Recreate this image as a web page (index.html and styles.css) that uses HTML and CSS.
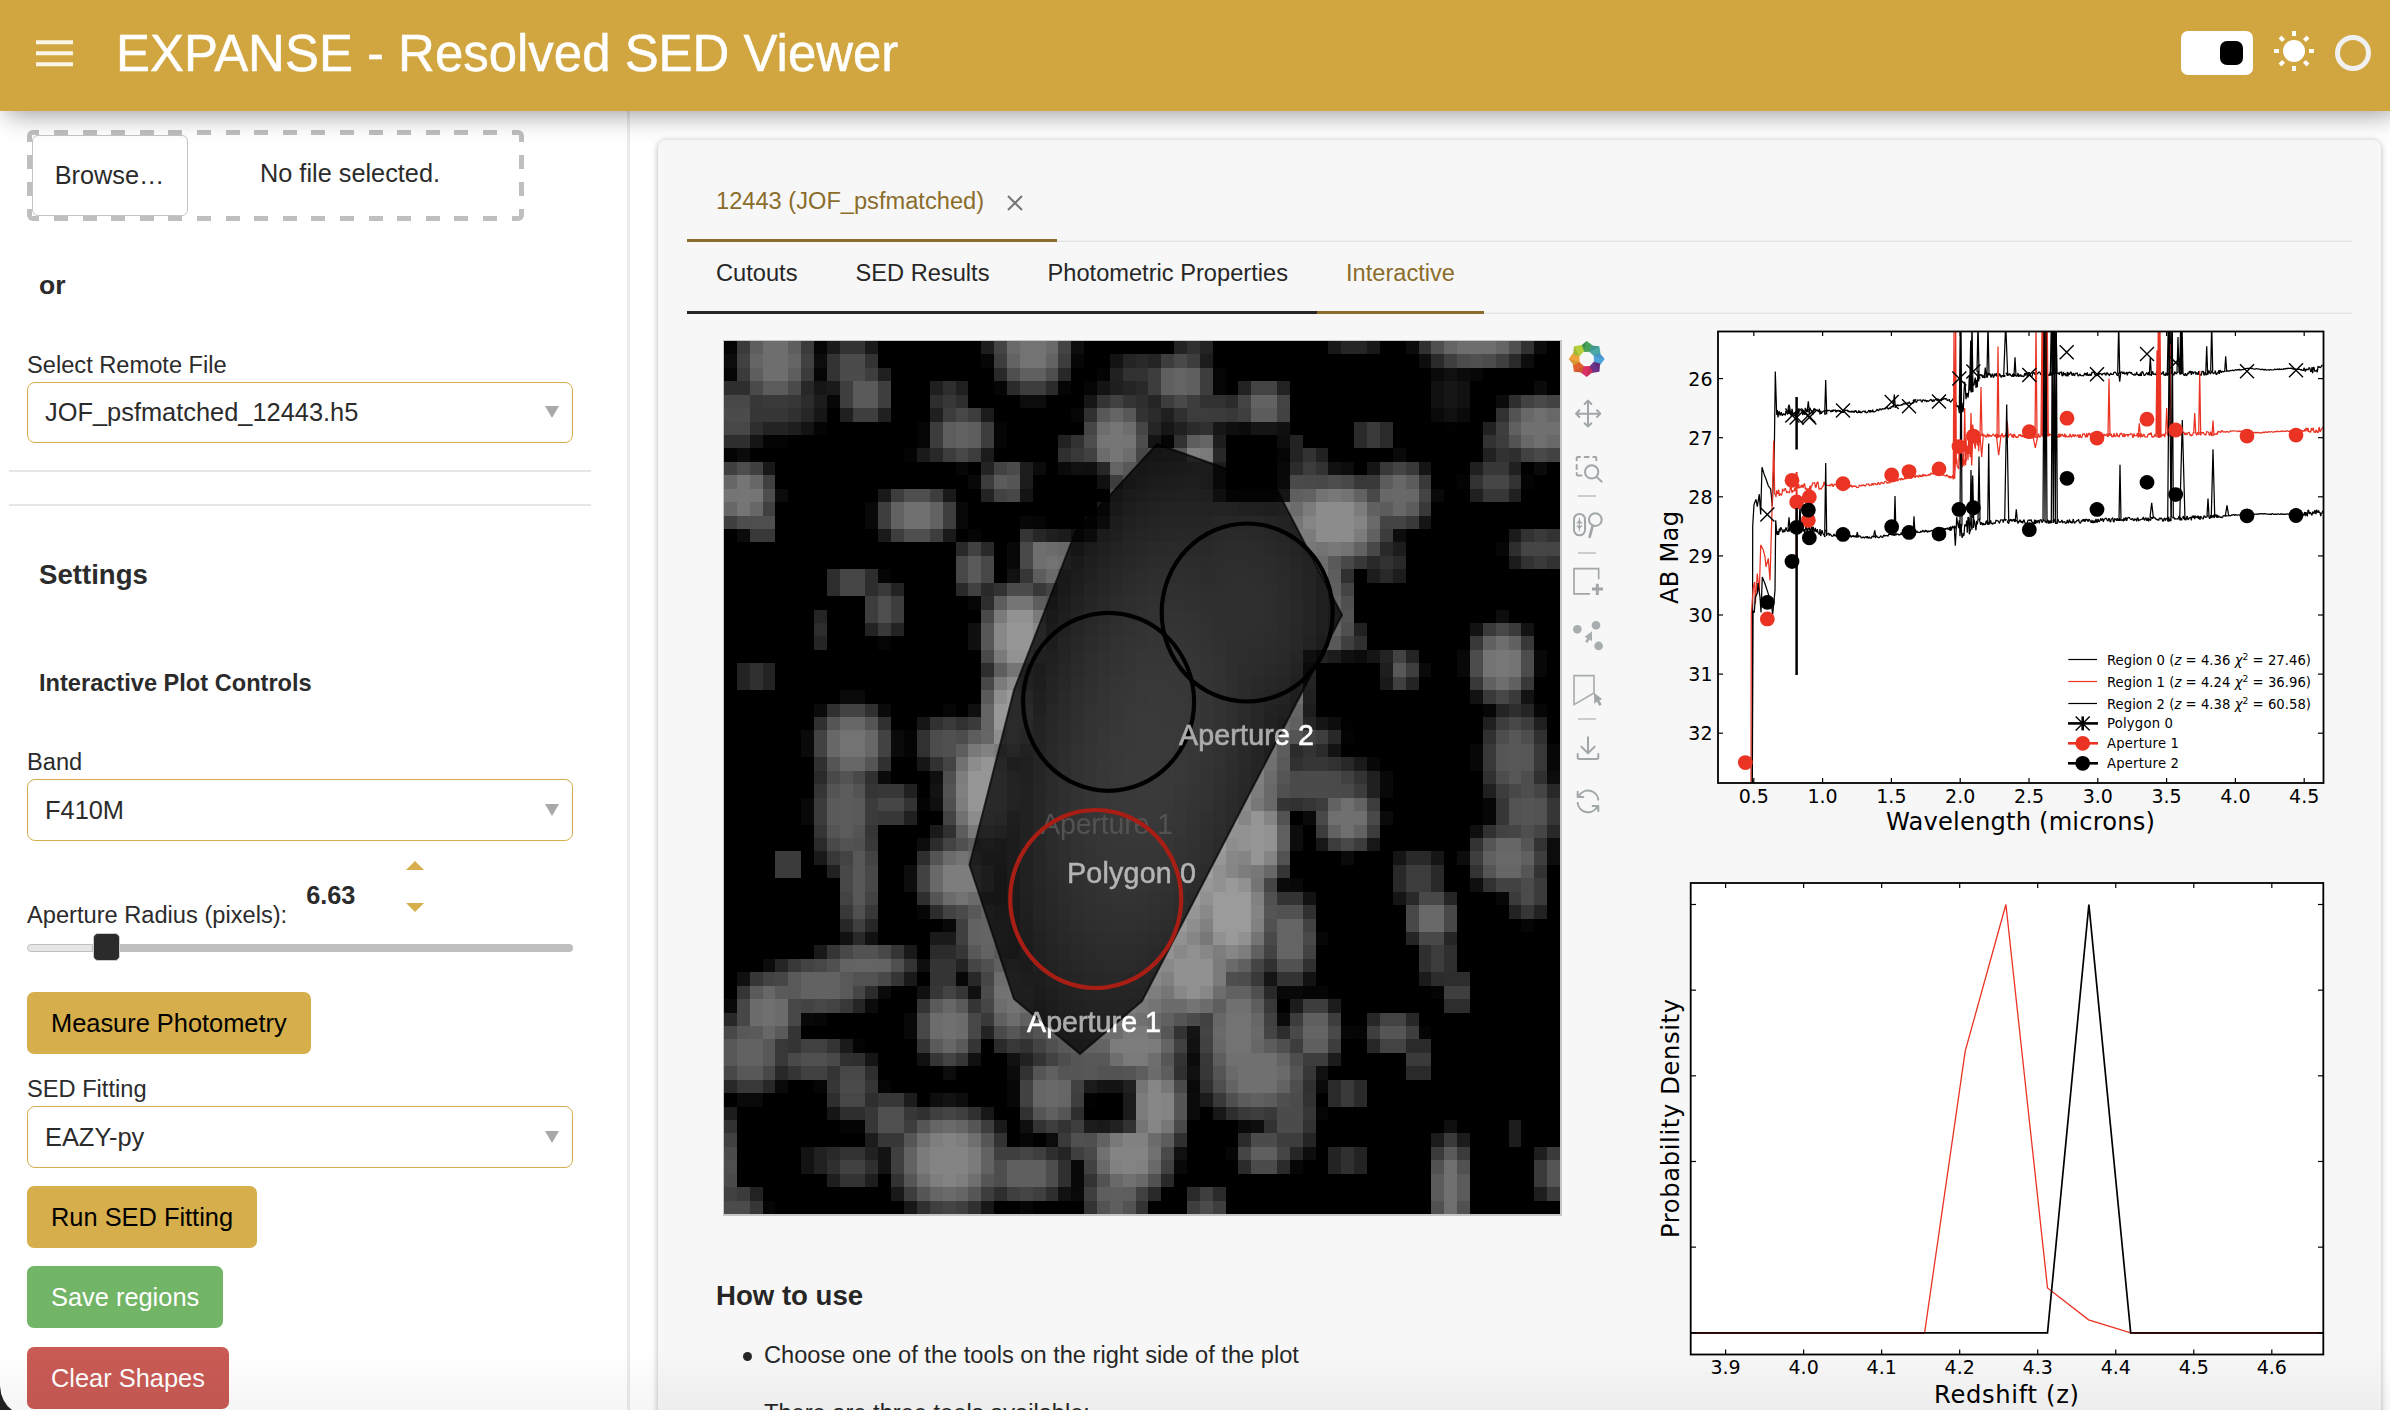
FILE: index.html
```html
<!DOCTYPE html>
<html lang="en">
<head>
<meta charset="utf-8">
<title>EXPANSE - Resolved SED Viewer</title>
<link rel="stylesheet" href="styles.css">
</head>
<body>
<header class="header">
  <svg class="menu" viewBox="0 0 38 28"><path d="M0 2.2h37M0 13.2h37M0 24.2h37" stroke="#fbf5e8" stroke-width="4"/></svg>
  <h1 class="title">EXPANSE - Resolved SED Viewer</h1>
  <div class="toggle"><span class="knob"></span></div>
  <svg class="sun" viewBox="-21 -21 42 42"><circle r="11" fill="#fff"/><g stroke="#fff" stroke-width="4"><path d="M0-20v5M0 20v-5M-20 0h5M20 0h-5M-14-14l3.6 3.6M14 14l-3.6-3.6M-14 14l3.6-3.6M14-14l-3.6 3.6"/></g></svg>
  <span class="ring"></span>
</header>
<div class="layout">
  <aside class="sidebar">
    <div class="filedrop"><button class="browse">Browse…</button><span class="nofile">No file selected.</span></div>
    <h3 class="or">or</h3>
    <label class="label remote">Select Remote File</label>
    <div class="select first"><span>JOF_psfmatched_12443.h5</span><i class="caret"></i></div>
    <div class="rule r1"></div>
    <div class="rule r2"></div>
    <h3 class="settings">Settings</h3>
    <h4 class="controls">Interactive Plot Controls</h4>
    <label class="label band">Band</label>
    <div class="select"><span>F410M</span><i class="caret"></i></div>
    <div class="radius"><span class="label">Aperture Radius (pixels):</span><b class="value">6.63</b><span class="spin"><i class="up"></i><i class="down"></i></span></div>
    <div class="slider"><span class="done"></span><span class="handle"></span><span class="rest"></span></div>
    <button class="btn gold measure">Measure Photometry</button>
    <label class="label fitting">SED Fitting</label>
    <div class="select"><span>EAZY-py</span><i class="caret"></i></div>
    <button class="btn gold run">Run SED Fitting</button>
    <button class="btn green">Save regions</button>
    <button class="btn red">Clear Shapes</button>
  </aside>
  <main class="main">
    <section class="card">
      <nav class="tabs outer"><a class="tab on">12443 (JOF_psfmatched)<svg class="close" viewBox="0 0 16 16"><path d="M1 1l14 14M15 1L1 15" stroke="#777" stroke-width="2"/></svg></a></nav>
      <nav class="tabs inner"><a class="tab">Cutouts</a><a class="tab">SED Results</a><a class="tab">Photometric Properties</a><a class="tab on">Interactive</a></nav>
      <div class="content">
        <div class="left">
          <div class="viewer">
            <div class="figure">
              <canvas id="cutout" class="cutout" width="65" height="65"></canvas>
              <svg class="shapes" viewBox="724 341 836 873">
                <g id="poly"><path d="M1157 444L1275 486L1342 615L1142 1001L1080 1054L1014 999L969.500 865L1014 690L1075 533Z" fill="#000" fill-opacity=".6" stroke="#000" stroke-opacity=".7" stroke-width="2"/></g>
                <g fill="none" stroke-width="4.200"><ellipse cx="1108.600" cy="701.800" rx="85.500" ry="89" stroke="#000"/><ellipse cx="1247.200" cy="612.500" rx="85.500" ry="89" stroke="#000"/></g>
                <g class="tags">
                  <text x="1041" y="834" textLength="132" fill="#7b7b7b" stroke="none">Aperture 1</text>
                  <text x="1179" y="745" textLength="135">Aperture 2</text>
                  <text x="1027" y="1031.500" textLength="134">Aperture 1</text>
                </g>
                <path d="M1157 444L1275 486L1342 615L1142 1001L1080 1054L1014 999L969.500 865L1014 690L1075 533Z" fill="#000" fill-opacity=".33"/>
                <text class="tag" x="1067" y="882.500" textLength="129" fill="#b4b4b4">Polygon 0</text>
                <ellipse cx="1095.700" cy="899" rx="85.500" ry="89" fill="none" stroke="#a81e14" stroke-width="4.200"/>
              </svg>
            </div>
            <div class="toolbar">
              <svg viewBox="66 63 150 135"><g id="logo" transform="translate(140 117)"></g></svg>
              <svg viewBox="66 198 150 164"><g class="ic"><path d="M144 244v74M108 281h73M134 252l10-10 10 10M134 310l10 10 10-10M118 271l-10 10 10 10M171 271l10 10-10 10"/></g></svg>
              <svg viewBox="66 362 150 164"><g class="ic"><path d="M110 420v-6q0-4 4-4h6M134 410h12M160 410h6q3 0 3 4v6M110 434v12M110 458v4q0 4 4 4h10"/><circle cx="155" cy="455" r="20"/><path d="M170 470l15 14"/></g></svg>
              <hr>
              <svg viewBox="66 531 150 162"><g class="ic"><rect x="102" y="581" width="33" height="64" rx="16"/><circle cx="166" cy="598" r="19"/><path d="M158 616l-9 34" stroke-width="8"/><path d="M118 594v38M111 608h15M111 617h15" stroke-width="3"/></g><path d="M110 607l8-9 8 9zM110 618l8 9 8-9z" fill="#a1a6a9"/></svg>
              <hr>
              <svg viewBox="66 699 150 164"><g fill="none" stroke="#a1a6a9" stroke-width="5"><path d="M176 775v-32h-74v76h48"/><path d="M172 788v34M156 804h33" stroke-width="9"/></g></svg>
              <svg viewBox="66 863 150 164"><g fill="#a8adb0"><circle cx="112" cy="927" r="13"/><circle cx="168" cy="915" r="13"/><circle cx="176" cy="977" r="13"/><path d="M156 933v30l-7-5-7 10-7-4 7-10-8-5z"/></g></svg>
              <svg class="active" viewBox="66 1027 150 164"><path d="M162 1117v-52h-60v87z" fill="none" stroke="#a8adb0" stroke-width="5"/><path d="M162 1116l25 20-9 3 7 13-7 4-7-13-8 7z" fill="#a1a6a9"/></svg>
              <hr>
              <svg viewBox="66 1197 150 162"><g class="ic"><path d="M144 1248v44M124 1276l20 20 20-20M113 1298v10q0 5 5 5h52q5 0 5-5v-10"/></g></svg>
              <svg viewBox="66 1359 150 164"><g class="ic"><path d="M175 1436a31 31 0 0 0-58-11M113 1412v16h17M113 1446a31 31 0 0 0 58 12M175 1471v-16h-17"/></g></svg>
            </div>
          </div>
          <h3 class="how">How to use</h3>
          <ul class="steps"><li>Choose one of the tools on the right side of the plot</li><li>There are three tools available:</li></ul>
        </div>
        <div class="plots">
          <svg id="sed" class="sed" viewBox="1640 314 712 536"></svg>
          <svg id="pdf" class="pdf" viewBox="1640 850 712 560"></svg>
        </div>
      </div>
    </section>
  </main>
</div>
<div class="fade"></div>
<svg class="corner" viewBox="0 0 12 24"><path d="M0 0Q1 16 12 24H0Z" fill="#222"/></svg>
<script src="script.js"></script>
</body>
</html>
```
FILE: styles.css
```css
* { box-sizing: border-box; }
body { margin: 0; width: 2390px; height: 1410px; overflow: hidden; position: relative; background: #fff; color: #2b2b2b; font-family: "Liberation Sans", Arial, sans-serif; font-size: 23.65px; }
h1, h3, h4, ul { margin: 0; padding: 0; }
svg { display: block; }
.header { position: relative; z-index: 2; height: 111px; padding: 0 19px 0 36px; display: flex; align-items: center; background: #d1a640; box-shadow: 6px 4px 24px rgba(0,0,0,.38); }
.menu { width: 38px; height: 28px; margin-top: -3px; }
.title { margin: -4px auto 0 42px; color: #fff; font-size: 50.950px; font-weight: 400; line-height: 60px; white-space: nowrap; -webkit-text-stroke: .5px #fff; }
.toggle { width: 72px; height: 44px; margin-top: -5px; padding: 10px; display: flex; justify-content: flex-end; background: #fff; border-radius: 7px; }
.knob { width: 23px; height: 24px; background: #000; border-radius: 7px; }
.sun { width: 42px; height: 42px; margin: -9px 20px 0; }
.ring { width: 36px; height: 36px; margin-top: -5px; border: 5px solid #f0f0f0; border-radius: 50%; }
.layout { display: flex; height: 1299px; }
.sidebar { width: 630px; flex: none; padding: 19px 0 0 27px; border-right: 3px solid #ebebeb; display: flex; flex-direction: column; align-items: flex-start; }
.filedrop { --dash-x: repeating-linear-gradient(90deg, #bfbfbf 0 12.400px, transparent 12.400px 26.900px, #bfbfbf 26.900px 28.600px); --dash-y: repeating-linear-gradient(#bfbfbf 0 12px, transparent 12px 25px, #bfbfbf 25px 27px); width: 497px; height: 91px; padding: 5px; display: flex; font-size: 25.3px; background: var(--dash-x) top / 100% 5px no-repeat, var(--dash-x) bottom / 100% 5px no-repeat, var(--dash-y) left / 5px 100% no-repeat, var(--dash-y) right / 5px 100% no-repeat; border-radius: 6px; }
.browse { width: 156px; height: 81px; padding: 0 1px 0 0; border: 1px solid #c4c4c4; border-radius: 6px; background: #fff; color: inherit; font: inherit; }
.nofile { margin-left: 72px; line-height: 76px; }
.or { margin: 43.500px 0 0 12px; font-size: 26.500px; line-height: 40px; }
.label { line-height: 30px; }
.remote { margin-top: 45px; }
.select { width: 546px; height: 62px; margin-top: 2.500px; padding: 0 13px 0 17px; border: 1.500px solid #d6af4c; border-radius: 8px; display: flex; justify-content: space-between; align-items: center; background: #fff; font-size: 25.400px; }
.select.first { height: 61px; }
.caret { border: 7px solid transparent; border-top: 12px solid #a8a8a8; border-bottom: 0; margin-top: -1px; }
.rule { width: 582px; height: 2px; margin-left: -18px; background: #e6e6e6; }
.r1 { margin-top: 26.500px; }
.r2 { margin-top: 32.500px; }
.settings { margin: 48.500px 0 0 12px; font-size: 27.600px; line-height: 40px; }
.controls { margin: 68.500px 0 0 12px; font-size: 23.600px; line-height: 40px; }
.band { margin-top: 43.500px; }
.radius { width: 546px; height: 91.500px; display: flex; }
.radius .label { margin-top: 58.500px; }
.value { margin: 33.500px 0 0 19px; font-size: 25.300px; line-height: 40px; }
.spin { margin: 19.500px 0 0 51px; display: flex; flex-direction: column; gap: 33px; }
.up, .down { border: 9px solid transparent; }
.up { border-bottom-color: #d6af4c; border-top: 0; }
.down { border-top-color: #d6af4c; border-bottom: 0; }
.slider { width: 546px; height: 28px; display: flex; align-items: center; }
.done { width: 66px; height: 8px; background: #e6e6e6; border: 1px solid #bfbfbf; border-radius: 4px 0 0 4px; margin-top: 2px; }
.handle { width: 27px; height: 28px; background: #2b2b2b; border: 1px solid #ccc; border-radius: 5px; }
.rest { flex: 1; height: 8px; background: #bfbfbf; border-radius: 0 4px 4px 0; margin-top: 2px; }
.btn { flex: none; height: 62px; margin-top: 18px; padding: 0 24px; border: 0; border-radius: 7px; font: 25.400px/62px "Liberation Sans", Arial, sans-serif; white-space: nowrap; }
.gold { background: #d6af4c; color: #000; }
.run { margin-top: 17.500px; }
.green { background: #73b566; color: #fff; }
.red { background: #c95a54; color: #fff; margin-top: 19px; }
.measure { margin-top: 31px; }
.fitting { margin-top: 20px; }
.main { flex: 1; padding: 29px 9px 0 28px; }
.card { height: 1300px; padding: 30px 29px 0; background: #f7f7f7; border-radius: 8px; box-shadow: 0 1px 6px rgba(0,0,0,.3); }
.tabs { display: flex; height: 72px; color: #262626; box-shadow: inset 0 -1.500px #e6e6e6; }
.tab { height: 72px; padding: 0 29px; border-bottom: 3px solid #262626; display: flex; align-items: center; line-height: 60px; }
.tab.on { color: #8a6d2b; border-color: #8a6d2b; }
.outer .tab { padding-bottom: 9px; padding-top: 1px; }
.inner .tab { padding-bottom: 8px; }
.close { width: 16px; height: 16px; margin: 4px 5px 0 23px; }
.content { display: flex; }
.left { width: 953px; flex: none; padding: 26px 0 0 36px; }
.viewer { display: flex; }
.figure { position: relative; width: 839px; height: 876px; border: 1px solid #c8c6c6; border-width: 1px 2px 2px 1px; background: #000; }
.cutout { display: block; width: 836px; height: 873px; image-rendering: pixelated; }
.shapes { position: absolute; left: 0; top: 0; width: 836px; height: 873px; }
.tags, .tag { font: 28.600px "Liberation Sans", Arial, sans-serif; }
.tags { fill: #fff; stroke: #fff; stroke-width: .6; }
.tag { stroke: #b4b4b4; stroke-width: .5; }
.toolbar { width: 50px; display: flex; flex-direction: column; padding-top: 1px; }
.toolbar svg { width: 50px; height: 54.600px; flex: none; }
.toolbar svg:first-child { height: 45px; }
.toolbar hr { flex: none; width: 18px; height: 2px; margin: 0 0 0 16px; border: 0; background: #ccc; }
.ic { fill: none; stroke: #a1a6a9; stroke-width: 6; stroke-linecap: round; stroke-linejoin: round; }
.active { box-shadow: -3px 0 #57a8dc; }
.how { margin: 60px 0 0 -7px; font-size: 27.600px; line-height: 40px; color: #262626; }
.steps { margin: 10px 0 0 41px; line-height: 58px; color: #262626; list-style: none; }
.steps li { display: flex; align-items: center; margin-left: -21px; }
.steps li::before { content: ""; width: 9px; height: 9px; margin: 2px 12px 0 0; border-radius: 50%; background: #262626; }
.plots { width: 712px; display: flex; flex-direction: column; }
.sed { width: 712px; height: 536px; }
.pdf { width: 712px; height: 560px; }
.plots text { font-family: "DejaVu Sans", sans-serif; fill: #000; }
.fade { position: absolute; left: 0; right: 0; bottom: 0; height: 60px; background: linear-gradient(rgba(0,0,0,0), rgba(0,0,0,.04)); }
.corner { position: absolute; left: 0; bottom: 0; width: 12px; height: 24px; }
```
FILE: script.js
```javascript
(() => {
// Cutout: light sources as [col0, col1, row0, row1, peak] on a 65 x 65 grid
const sources = [
[1,7,-2,5,110],[0,8,2,7,55],[-1,3,3,8,75],[8,12,0,4,75],[9,13,2,6,90],[16,19,3,6,55],[16,21,5,9,98],[15,20,8,9,40],
[21,27,-3,4,115],[20,27,-1,1,70],[35,38,-1,1,50],[33,38,1,5,100],[30,35,1,4,50],[28,33,4,11,118],[26,29,7,10,60],[28,35,3,8,50],
[34,42,4,7,60],[40,44,3,7,98],[35,40,7,10,130],[47,51,-1,1,40],[54,63,-2,2,110],[49,52,6,8,60],[44,47,8,11,60],[43,45,7,9,45],
[60,67,4,9,112],[59,62,6,9,60],[58,62,9,12,70],[55,58,2,6,22],[43,52,10,17,140],[43,48,10,12,75],[50,55,9,14,105],[50,53,15,18,50],
[61,66,14,17,70],[-1,4,9,14,118],[2,4,12,15,80],[12,18,11,15,112],[20,25,9,12,92],[23,28,13,19,115],[18,21,15,19,90],[8,12,17,19,75],
[11,14,18,22,78],[7,8,20,23,45],[1,4,24,26,50],[7,13,27,33,115],[7,12,30,40,92],[9,12,35,45,88],[11,15,33,36,70],[4,6,38,40,70],[20,26,18,26,150],
[20,25,23,33,155],[17,24,28,39,150],[15,22,37,43,125],[15,20,28,32,80],[18,23,40,48,100],[20,25,44,53,115],[16,26,35,41,90],
[39,44,33,41,150],[36,43,37,48,155],[33,40,43,51,145],[37,43,46,57,115],[37,46,51,58,112],[41,51,31,35,75],[46,51,33,38,112],
[42,46,41,48,100],[44,48,49,54,100],[42,46,54,61,75],[40,44,59,62,95],[23,28,53,59,105],[28,36,50,55,125],[31,36,53,61,135],
[28,35,57,64,132],[28,33,61,66,95],[23,36,52,56,88],[26,30,58,61,80],[15,20,48,54,112],[16,18,44,50,55],[13,22,57,65,132],[20,27,60,64,95],
[7,15,45,48,100],[3,12,46,50,98],[1,6,47,53,112],[-1,5,50,56,98],[4,10,52,55,80],[8,12,53,58,75],[11,15,56,60,80],[6,13,60,62,45],
[8,12,60,63,65],[-1,1,57,66,80],[-1,3,63,66,75],[58,63,21,27,120],[49,54,23,26,95],[47,50,21,24,60],[59,64,27,35,88],[60,65,32,38,85],
[58,64,36,41,105],[61,64,39,43,75],[52,56,38,42,60],[53,57,41,45,105],[54,57,44,48,60],[56,58,47,50,65],[50,54,50,53,85],[53,55,52,55,60],
[47,50,55,57,60],[47,50,60,62,50],[55,58,59,67,112],[63,67,60,64,85],[61,62,58,60,30],[36,39,63,66,75],[43,48,27,31,70],[46,49,16,25,100],
[22,29,46,54,90]
];
// Dark patches that cut into the galaxy, with softened edges
const gaps = [[39,43,7,11],[40,43,9,11],[24,29,10,13],[25,28,12,14],[46,51,24,28],[29,31,56,58]];
const ctx = document.getElementById('cutout').getContext('2d');
for (let r = 0; r < 65; r++) for (let c = 0; c < 65; c++) {
  let v = 0;
  const x = c + .5, y = r + .5;
  for (const [a, b, t, u, p] of sources) {
    const dx = (x - (a + b) / 2) / ((b - a) / 2 + .3), dy = (y - (t + u) / 2) / ((u - t) / 2 + .3);
    const d = dx * dx + dy * dy;
    if (d < 1.2) v = Math.max(v, p * Math.min(1, 1.1 - .88 * d));
  }
  // Main galaxy: tilted disc plus a companion core at the upper right
  const ang = .2, gx = x - 33, gy = y - 31;
  const gu = gx * Math.cos(ang) + gy * Math.sin(ang), gv = -gx * Math.sin(ang) + gy * Math.cos(ang);
  const g = (gu / 11) ** 2 + (gv / 24) ** 2;
  if (g < 1) v = Math.max(v, 75 + 140 * (1 - g));
  const n = ((x - 40) / 8.5) ** 2 + ((y - 20) / 12) ** 2;
  if (n < 1) v = Math.max(v, 75 + 100 * (1 - n));
  for (const [a, b, t, u] of gaps) {
    const ox = Math.max(a - x, x - b, 0), oy = Math.max(t - y, y - u, 0);
    v *= Math.min(1, Math.hypot(ox, oy) / 1.6);
  }
  v = Math.round(Math.max(0, v));
  ctx.fillStyle = `rgb(${v},${v},${v})`;
  ctx.fillRect(c, r, 1, 1);
}

// Toolbar logo: ring of eight coloured blades
const blades = ['#48a35a', '#4aa9a4', '#4fa3dd', '#6b3288', '#da2f63', '#e2622f', '#f0a33a', '#b5cf3d'];
document.getElementById('logo').innerHTML = blades.map((f, i) =>
  `<path transform="rotate(${i * 45})" d="M-19-38L0-54L19-40L12-22L-9-21Z" fill="${f}"/><path transform="rotate(${i * 45})" d="M-19-38L0-54L-9-21Z" fill="#000" opacity=".1"/>`).join('');

// Seeded noise for the spectra
let seed = 7;
const rnd = () => (seed = (seed * 16807) % 2147483647) / 2147483647 - .5;
const px = x => 1640 + x / 3, py = y => 310 + y / 2.9585;
function spectrum(head, base, spikes, color, noise) {
  const pts = head.slice();
  let k = 0;
  for (let x = base[0][0]; x <= 2048; x += 2) {
    while (k < base.length - 2 && x > base[k + 1][0]) k++;
    const [x0, y0] = base[k], [x1, y1] = base[k + 1];
    let y = y0 + (y1 - y0) * (x - x0) / (x1 - x0);
    y += rnd() * (x < 560 ? 24 : x < 930 ? 8 : x < 945 ? 18 : x < 1020 ? noise : x < 1750 ? 14 : x < 1990 ? 3 : 20);
    pts.push([x, y]);
    for (const [sx, sy, w = 3] of spikes) if (sx >= x && sx < x + 2) pts.push([sx - w, y], [sx, sy], [sx + w, y]);
  }
  return `<path d="M${pts.map(([x, y]) => px(x).toFixed(1) + ' ' + py(y).toFixed(1)).join('L')}" fill="none" stroke="${color}" stroke-width="1.25" stroke-linejoin="bevel"/>`;
}
const T = 40, R = '#ea3323';
const offscale = list => list.map(x => [x, T]);
const s0 = spectrum([[337,1399],[338,640],[342,575],[348,560],[352,582],[358,545],[362,605],[366,465],[372,485],[378,500],[385,520],[392,530],[397,580],[403,420],[406,182],[410,310]],
  [[412,308],[450,302],[560,298],[680,302],[760,286],[830,270],[940,264],[965,280],[975,240],[990,215],[1020,195],[1200,190],[1580,188],[1700,187],[1760,181],[1830,173],[1890,177],[1950,173],[2010,180],[2048,172]],
  [[447,280],[505,270],[557,207],[763,250],[822,265],...offscale([961,996,1014,1044]),[992,90],[1036,170],[1097,T,6],[1125,140],...offscale([1215,1234,1240,1243,1248,1436,1585,1593,1622,1626,1715]),[1531,140],[1614,80],[1700,107],[1757,137],[1439,212]], '#000', 75);
const s1 = spectrum([[333,1399],[334,900],[340,820],[344,805],[346,870],[352,780],[358,835],[362,695],[370,710],[375,730],[378,760],[385,735],[390,800],[397,560],[401,387],[404,545]],
  [[406,543],[470,527],[560,518],[650,522],[740,510],[800,497],[900,482],[945,500],[955,440],[965,430],[985,395],[1010,372],[1360,371],[1560,370],[1720,365],[1780,358],[1860,363],[1920,359],[2048,354]],
  [[942,T,2],[947,T,2],[974,290],[993,305],[1023,228],[1074,108],[1102,330],[1188,T],[1206,T],[1210,T],[1218,T],[1222,T],[1407,203],[1498,335],[1551,120],...offscale([1555,1557,1560]),[1580,290],[1590,100],[1664,305],[1679,180],[1719,327],[962,460],[976,455],[995,460],[1025,435,5],[1076,430,7],[1186,408,7]], R, 95);
const s2 = spectrum([[337,1399],[339,890],[343,895],[346,850],[352,838],[354,808],[360,850],[363,895],[367,790],[375,810],[385,840],[395,880],[398,900],[405,830],[407,622],[410,660]],
  [[412,658],[440,645],[500,650],[550,658],[570,665],[640,670],[700,673],[760,665],[850,655],[940,645],[975,645],[1000,632],[1100,625],[1200,627],[1260,626],[1460,620],[1580,618],[1660,615],[1760,608],[1840,603],[1960,604],[2048,600]],
  [[447,613],[480,575],[557,453],[652,657],[704,652],[765,550],[822,610],[963,T],[993,473],[998,490],[1017,433],[1046,395],[1100,280,6],[1129,590],...offscale([1212,1218,1237,1243,1249]),[1440,458],[1535,570,5],[1588,T,5],[1597,T],[1627,325,8],[1704,558],[1719,412,5],[1761,578,5],[946,697]], '#000', 65);
const line = (x1, y1, x2, y2, w, c = '#000') => `<path d="M${x1} ${y1}L${x2} ${y2}" stroke="${c}" stroke-width="${w}"/>`;
const dot = (x, y, c) => `<circle cx="${x}" cy="${y}" r="7.4" fill="${c}"/>`;
const cross = (x, y) => `<path d="M${x - 7} ${y - 7}l14 14m0-14l-14 14" stroke="#000" stroke-width="1.4"/>`;
const xs = [[382,605],[457,312],[470,318],[505,312],[508,318],[609,297],[755,272],[807,285],[897,271],[958,203],[1000,182],[1168,192],[1280,125],[1371,190],[1521,130],[1607,155],[1821,181],[1968,178]];
const rd = [[316,1339],[382,914],[456,504],[470,568],[508,553],[505,622],[609,514],[755,488],[807,478],[897,470],[957,404],[1000,373],[1168,360],[1281,320],[1371,379],[1521,323],[1607,355],[1821,373],[1968,370]];
const bk = [[382,865],[456,744],[470,643],[505,592],[508,674],[609,664],[755,641],[807,658],[897,663],[957,590],[1000,585],[1168,650],[1281,498],[1371,590],[1521,510],[1607,546],[1821,609],[1968,608]];
let h = '<clipPath id="c"><rect x="1718" y="331.5" width="605.5" height="451.5"/></clipPath><rect x="1718" y="331.5" width="605.5" height="451.5" fill="#fff"/>';
h += `<g clip-path="url(#c)">${s0}${s1}${s2}</g>`;
h += xs.map(p => cross(px(p[0]), py(p[1]))).join('') + line(1796.6, 397, 1796.6, 449.5, 2.5);
h += line(1796.6, 472, 1796.6, 560, 2, R) + rd.map(p => dot(px(p[0]), py(p[1]), R)).join('');
h += line(1796.6, 508, 1796.6, 675, 2.5) + bk.map(p => dot(px(p[0]), py(p[1]), '#000')).join('');
h += '<rect x="1718" y="331.5" width="605.5" height="451.5" fill="none" stroke="#000" stroke-width="1.8"/>';
for (let m = 26; m <= 32; m++) {
  const y = 378.6 + 59.1 * (m - 26);
  h += line(1718, y, 1723, y, 1.2) + line(2318, y, 2323, y, 1.2) + `<text x="1712.5" y="${y + 7}" font-size="19" text-anchor="end">${m}</text>`;
}
for (let i = 1; i <= 9; i++) {
  const x = 1753.8 + 68.8 * (i - 1);
  h += line(x, 331, x, 336, 1.2) + line(x, 778, x, 783, 1.2) + `<text x="${x}" y="803" font-size="19" text-anchor="middle">${(i / 2).toFixed(1)}</text>`;
}
h += '<text x="1886" y="829.5" font-size="24.2" textLength="269">Wavelength (microns)</text><text transform="translate(1678 604) rotate(-90)" font-size="24.2" textLength="93">AB Mag</text>';
[['0', '4.36', '27.46', '#000'], ['1', '4.24', '36.96', R], ['2', '4.38', '60.58', '#000']].forEach(([n, z, chi, c], i) => {
  const y = 659.5 + 22 * i;
  h += line(2068.3, y, 2097, y, 1.2, c) + `<text x="2107" y="${y + 5}" font-size="13.2" textLength="204">Region ${n} (<tspan font-style="italic">z</tspan> = ${z} <tspan font-style="italic">χ</tspan><tspan dy="-5" font-size="9.2">2</tspan><tspan dy="5"> = ${chi})</tspan></text>`;
});
[['Polygon 0', 723.4, '#000', 66], ['Aperture 1', 743.3, R, 72], ['Aperture 2', 763.3, '#000', 72]].forEach(([t, y, c, w], i) => {
  h += line(2068, y, 2098, y, 2.6, c) + (i ? dot(2082.7, y, c) : cross(2082.7, y) + line(2082.7, y - 7, 2082.7, y + 7, 2.6)) + `<text x="2107" y="${y + 5}" font-size="13.2" textLength="${w}">${t}</text>`;
});
document.getElementById('sed').innerHTML = h;

// Redshift probability density
let q = '<rect x="1690.7" y="883" width="632.6" height="471.5" fill="#fff"/>';
q += `<path d="M1691 1332.800H1924.600L1965.200 1051.200L2005.900 904.500L2047.500 1287.900L2088.600 1319.800L2130.700 1332.800H2323" fill="none" stroke="${R}" stroke-width="1.3"/>`;
q += '<path d="M1691 1332.800H2047.500L2088.900 904.500L2130.700 1332.800H2323" fill="none" stroke="#000" stroke-width="1.7"/>';
q += line(1691, 1332.8, 1924.6, 1332.8, 1.6, '#2a0000') + line(2130.7, 1332.8, 2323, 1332.8, 1.6, '#2a0000');
q += '<rect x="1690.700" y="883" width="632.600" height="471.500" fill="none" stroke="#000" stroke-width="1.800"/>';
for (let i = 0; i < 8; i++) {
  const x = 1725.6 + 78.03 * i;
  q += line(x, 883, x, 888, 1.2) + line(x, 1349.5, x, 1354.5, 1.2) + `<text x="${x}" y="1374" font-size="19" text-anchor="middle">${(3.9 + i / 10).toFixed(1)}</text>`;
}
for (let i = 0; i < 6; i++) {
  const y = 904.5 + 85.66 * i;
  q += line(1691, y, 1696, y, 1.2) + line(2318, y, 2323, y, 1.2);
}
q += '<text x="1934" y="1403" font-size="24.200" textLength="145">Redshift (z)</text><text transform="translate(1679 1238) rotate(-90)" font-size="24.200" textLength="239">Probability Density</text>';
document.getElementById('pdf').innerHTML = q;
})();
```
